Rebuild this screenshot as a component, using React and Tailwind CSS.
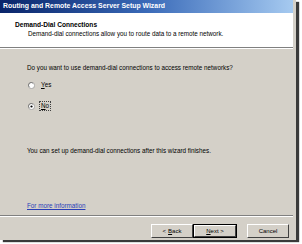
import React from "react";

// Small classic radio button
const Radio = ({ checked }) => (
  <svg width="7" height="7" viewBox="0 0 12 12" className="shrink-0">
    <circle cx="6" cy="6" r="5.3" fill="#ffffff" stroke="#8c8c8c" strokeWidth="1.2" />
    <path d="M2.2 8.5 A4.4 4.4 0 0 1 8.5 2.2" fill="none" stroke="#555555" strokeWidth="1" />
    {checked && <circle cx="6" cy="6" r="1.9" fill="#000000" />}
  </svg>
);

const Button = ({ children, isDefault }) => (
  <div
    className={`h-[14px] flex items-center justify-center ${
      isDefault ? "border border-black" : ""
    }`}
  >
    <div className="h-full w-full flex items-center justify-center bg-[#d4d0c8] border-t border-l border-white border-r border-b border-r-[#404040] border-b-[#404040] text-[6px] leading-none">
      {children}
    </div>
  </div>
);

export default function App() {
  return (
    <div
      className="w-[302px] h-[244px] bg-white relative overflow-hidden text-black"
      style={{ fontFamily: '"Liberation Sans", Arial, sans-serif' }}
    >
      <div className="w-[296px] h-[240px] bg-[#d4d0c8] pr-[3px] pb-[1px] flex flex-col shadow-[3px_2px_1px_#3a3a3a]">
        {/* Title bar */}
        <div className="h-[13px] shrink-0 bg-linear-to-r from-[#0a246a] via-[#3a6ab8] to-[#a6caf0] flex items-center pl-[3px]">
          <span className="text-white font-bold text-[6.9px] leading-none">
            Routing and Remote Access Server Setup Wizard
          </span>
        </div>

        {/* Header */}
        <div className="h-[34px] shrink-0 bg-white pt-[8px]">
          <div className="pl-[15px] font-bold text-[6.6px] leading-[8px]">Demand-Dial Connections</div>
          <div className="pl-[28px] text-[6.3px] leading-[8px] mt-[1px]">
            Demand-dial connections allow you to route data to a remote network.
          </div>
        </div>
        <div className="h-px shrink-0 bg-[#808080]" />
        <div className="h-px shrink-0 bg-white" />

        {/* Body */}
        <div className="flex-1 flex flex-col pl-[27px] pt-[15px] text-[6.3px] leading-[8px]">
          <div>Do you want to use demand-dial connections to access remote networks?</div>
          <div className="flex items-center gap-[4px] mt-[8px] pl-[1px]">
            <Radio />
            <span className="px-[1px] border border-transparent">
              <span className="underline">Y</span>es
            </span>
          </div>
          <div className="flex items-center gap-[4px] mt-[11px] pl-[1px]">
            <Radio checked />
            <span className="px-[1px] border border-dotted border-[#404040]">
              <span className="underline">N</span>o
            </span>
          </div>
          <div className="mt-[36px]">You can set up demand-dial connections after this wizard finishes.</div>
          <div className="mt-[47px] text-[#2a3fb8] underline">For more information</div>
        </div>

        <div className="h-px shrink-0 bg-[#808080]" />
        <div className="h-px shrink-0 bg-white" />

        {/* Buttons */}
        <div className="h-[22px] shrink-0 flex items-start pt-[7px] pl-[151px]">
          <div className="w-[42px]">
            <Button>
              &lt; <span className="underline ml-[2px]">B</span>ack
            </Button>
          </div>
          <div className="w-[44px]">
            <Button isDefault>
              <span className="underline">N</span>ext &gt;
            </Button>
          </div>
          <div className="w-[42px] ml-[10px]">
            <Button>Cancel</Button>
          </div>
        </div>
      </div>
    </div>
  );
}
